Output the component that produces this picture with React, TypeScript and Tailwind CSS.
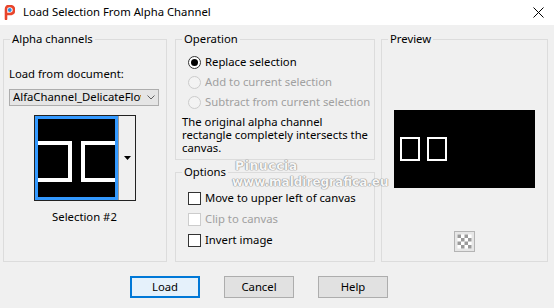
import React from 'react';

// Windows-style "Load Selection From Alpha Channel" dialog

function AppIcon() {
  return (
    <svg width="11" height="15" viewBox="0 0 11 15">
      <path d="M2 14 L2 4 Q2 1 5.5 1 Q10 1 10 5 Q10 9 5.5 9 L4 9" fill="none" stroke="#e8452c" strokeWidth="2.6" strokeLinecap="round" />
      <circle cx="5.8" cy="5" r="1.9" fill="#2b8fe0" />
    </svg>
  );
}

function GroupBox({ title, className, children }: { title: string; className?: string; children?: React.ReactNode }) {
  return (
    <fieldset className={`border border-[#dcdcdc] ${className ?? ''}`}>
      <legend className="ml-[6px] px-[2px] leading-[16px] text-black">{title}</legend>
      {children}
    </fieldset>
  );
}

function Radio({ label, checked, disabled }: { label: string; checked?: boolean; disabled?: boolean }) {
  return (
    <div className="flex items-center h-[20px] pl-[12px] gap-[4px] whitespace-nowrap">
      <span
        className={`w-[13px] h-[13px] shrink-0 rounded-full border flex items-center justify-center ${
          disabled ? 'border-[#cccccc] bg-[#f3f3f3]' : 'border-[#333333] bg-white'
        }`}
      >
        {checked && <span className="w-[7px] h-[7px] rounded-full bg-black" />}
      </span>
      <span className={disabled ? 'text-[#a0a0a0]' : 'text-black'}>{label}</span>
    </div>
  );
}

function Checkbox({ label, disabled }: { label: string; disabled?: boolean }) {
  return (
    <div className="flex items-center h-[21px] pl-[12px] gap-[4px] whitespace-nowrap">
      <span className={`w-[13px] h-[13px] shrink-0 border bg-white ${disabled ? 'border-[#cccccc]' : 'border-[#333333]'}`} />
      <span className={disabled ? 'text-[#a0a0a0]' : 'text-black'}>{label}</span>
    </div>
  );
}

function Button({ label, primary }: { label: string; primary?: boolean }) {
  return (
    <div
      className={`w-[70px] h-[22px] flex items-center justify-center text-black ${
        primary ? 'bg-[#e5f1fb] border-2 border-[#0078d7]' : 'bg-[#e1e1e1] border border-[#adadad]'
      }`}
    >
      {label}
    </div>
  );
}

export default function App() {
  return (
    <div className="relative w-[554px] h-[308px] bg-[#f0f0f0] overflow-hidden text-[11.3px] font-['Segoe_UI','Noto_Sans',sans-serif]">
      {/* Title bar */}
      <div className="h-[25px] bg-white flex items-center pl-[4px]">
        <AppIcon />
        <span className="ml-[8px] text-black">Load Selection From Alpha Channel</span>
        <svg className="ml-auto mr-[10px]" width="11" height="11" viewBox="0 0 11 11">
          <path d="M0.5 0.5 L10.5 10.5 M10.5 0.5 L0.5 10.5" stroke="#000" strokeWidth="1" />
        </svg>
      </div>

      {/* Group boxes */}
      <div className="flex pl-[3px] pt-[6px]">
        <GroupBox title="Alpha channels" className="w-[164px] h-[231px]">
          <div className="pl-[5px] pt-[19px]">
            <div className="leading-[16px]">Load from document:</div>
            <div className="mt-[7px] w-[150px] h-[17px] bg-[#e5e5e5] border border-[#adadad] flex items-center pl-[3px]">
              <span className="w-[128px] overflow-hidden whitespace-nowrap">AlfaChannel_DelicateFlower</span>
              <svg className="ml-[6px]" width="8" height="5" viewBox="0 0 8 5">
                <path d="M0.5 0.5 L4 4 L7.5 0.5" fill="none" stroke="#606060" strokeWidth="1" />
              </svg>
            </div>
          </div>
          {/* Thumbnail picker */}
          <div className="ml-[30px] mt-[9px] w-[102px] h-[86px] border border-[#222] flex">
            <div className="w-[83px] h-full border-[3px] border-[#3399ff] bg-black overflow-hidden">
              <svg width="77" height="78" viewBox="0 0 77 78">
                <rect x="-2" y="24" width="34" height="37" fill="none" stroke="#fff" strokeWidth="4" />
                <rect x="45" y="24" width="36" height="37" fill="none" stroke="#fff" strokeWidth="4" />
              </svg>
            </div>
            <div className="flex-1 flex items-center justify-center border-l border-[#999]">
              <svg width="7" height="4" viewBox="0 0 7 4">
                <path d="M0 0 L7 0 L3.5 4 Z" fill="#000" />
              </svg>
            </div>
          </div>
          <div className="mt-[8px] leading-[16px] text-center pr-[1px]">Selection #2</div>
        </GroupBox>

        <div className="ml-[8px] w-[200px] flex flex-col">
          <GroupBox title="Operation" className="h-[129px]">
            <div className="pt-[5px]">
              <Radio label="Replace selection" checked />
              <Radio label="Add to current selection" disabled />
              <Radio label="Subtract from current selection" disabled />
            </div>
            <p className="mt-[3px] pl-[6px] pr-[4px] leading-[13px]">
              The original alpha channel rectangle completely intersects the canvas.
            </p>
          </GroupBox>
          <GroupBox title="Options" className="mt-[4px] h-[98px]">
            <div className="pt-[8px]">
              <Checkbox label="Move to upper left of canvas" />
              <Checkbox label="Clip to canvas" disabled />
              <Checkbox label="Invert image" />
            </div>
          </GroupBox>
        </div>

        <GroupBox title="Preview" className="ml-[6px] w-[167px] h-[231px]">
          <div className="flex flex-col items-center pt-[63px]">
            <svg width="141" height="78" viewBox="0 0 141 78" className="block">
              <rect width="141" height="78" fill="#000" />
              <rect x="7" y="28" width="18" height="22" fill="none" stroke="#fff" strokeWidth="2" />
              <rect x="34" y="28" width="18" height="22" fill="none" stroke="#fff" strokeWidth="2" />
            </svg>
            <svg width="21" height="21" viewBox="0 0 21 21" className="mt-[43px] block">
              <rect x="0.5" y="0.5" width="20" height="20" fill="#e6e6e6" stroke="#b4b4b4" />
              <rect x="3.5" y="3.5" width="14" height="14" fill="#fff" />
              <rect x="3.5" y="3.5" width="3.5" height="3.5" fill="#9a9a9a" />
              <rect x="10.5" y="3.5" width="3.5" height="3.5" fill="#9a9a9a" />
              <rect x="7" y="7" width="3.5" height="3.5" fill="#9a9a9a" />
              <rect x="14" y="7" width="3.5" height="3.5" fill="#9a9a9a" />
              <rect x="3.5" y="10.5" width="3.5" height="3.5" fill="#9a9a9a" />
              <rect x="10.5" y="10.5" width="3.5" height="3.5" fill="#9a9a9a" />
              <rect x="7" y="14" width="3.5" height="3.5" fill="#9a9a9a" />
              <rect x="14" y="14" width="3.5" height="3.5" fill="#9a9a9a" />
            </svg>
          </div>
        </GroupBox>
      </div>

      {/* Dialog buttons */}
      <div className="flex gap-[24px] pl-[130px] mt-[14px]">
        <Button label="Load" primary />
        <Button label="Cancel" />
        <Button label="Help" />
      </div>

      {/* Watermark stamped over the dialog */}
      <div className="absolute left-[232px] top-[158px] leading-[16px] font-bold text-[#f6f6f6] [text-shadow:0_0_1px_#8a8a8a,0_0_1px_#8a8a8a,0_0_1px_#8a8a8a] pointer-events-none font-['Verdana','DejaVu_Sans',sans-serif]">
        <div className="ml-[3px] text-[12.5px] tracking-[0.5px]">Pinuccia</div>
        <div className="text-[12px]">www.maldiregrafica.eu</div>
      </div>
    </div>
  );
}
